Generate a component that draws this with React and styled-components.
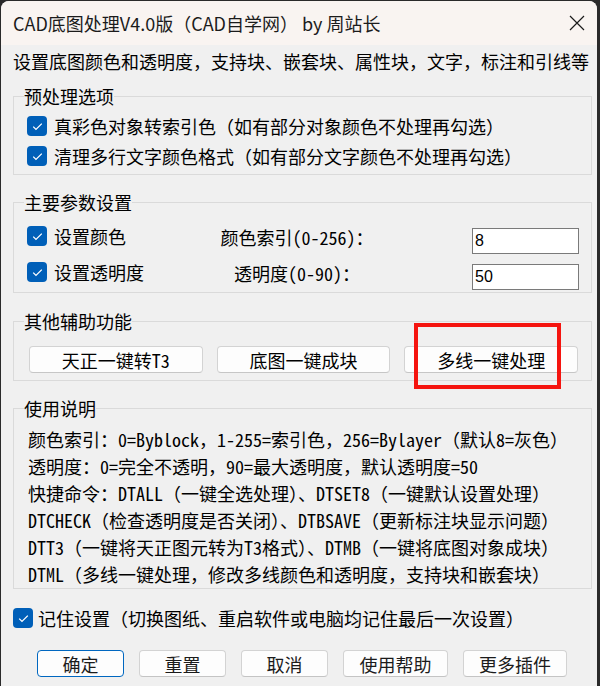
import styled, { createGlobalStyle } from "styled-components";

const GlobalStyle = createGlobalStyle`
 html, body {
  margin: 0;
  padding: 0;
  background: #2a2a2a;
 }
 body {
  font-family: "Noto Sans CJK SC", sans-serif;
 }
`

const SONG = `"Noto Sans Mono CJK SC", "Noto Sans CJK SC", monospace`
const HEI = `"Noto Sans CJK SC", "Noto Sans", sans-serif`

const Window = styled.div`
 width: 596px;
 height: 685px;
 margin: 1px 0 0 1px;
 background: #f0f0f0;
 border-radius: 8px 8px 0 0;
 overflow: hidden;
 display: flex;
 flex-direction: column;
`
const TitleBar = styled.div`
 height: 44px;
 flex-shrink: 0;
 background: #f9f4f1;
 display: flex;
 align-items: center;
 justify-content: space-between;
 padding: 0 12px;
 font-family: ${HEI};
 font-size: 18px;
 color: #1b1b1b;
`
const Body = styled.div`
 padding: 0 5px 0 12px;
 color: #000;
`
const Description = styled.div`
 height: 32px;
 line-height: 32px;
 font-family: ${SONG};
 font-size: 18px;
 white-space: nowrap;
`
const Group = styled.fieldset`
 margin: ${p => p.$top}px 0 0;
 border: 1px solid #dadada;
 padding: ${p => p.$pad};
 min-width: 0;
 legend {
  padding: 0;
  line-height: 20px;
  font-family: ${SONG};
  font-size: 18px;
 }
`
const CheckRow = styled.div`
 display: flex;
 align-items: center;
 gap: 7px;
 height: ${p => p.$h || 30}px;
 padding-left: ${p => p.$indent || 0}px;
 font-family: ${p => p.$sans ? HEI : SONG};
 font-size: 18px;
 white-space: nowrap;
`
const Box = styled.span`
 width: 20px;
 height: 20px;
 flex-shrink: 0;
 border-radius: 4px;
 background: #005fb8;
 display: flex;
 align-items: center;
 justify-content: center;
`
const ParamRow = styled.div`
 display: flex;
 align-items: flex-start;
 height: ${p => p.$h}px;
 padding-left: 3px;
`
const ParamCheck = styled(CheckRow)`
 width: 172px;
 height: 20px;
 padding-left: 0;
`
const ParamLabel = styled.div`
 width: 196px;
 text-align: center;
 line-height: 22px;
 font-family: ${SONG};
 font-size: 18px;
 white-space: nowrap;
`
const NumInput = styled.input`
 margin: 2px 0 0 auto;
 width: 107px;
 height: 26px;
 box-sizing: border-box;
 border: 1px solid #7a7a7a;
 background: #fff;
 padding: 0 2px;
 font-family: "Liberation Sans", Arial, sans-serif;
 font-size: 16px;
 color: #000;
 outline: none;
`
const ToolRow = styled.div`
 position: relative;
 display: grid;
 grid-template-columns: repeat(3, 1fr);
 gap: 14px;
 padding: 0 3px 0 5px;
`
const ToolButton = styled.button`
 height: 27px;
 background: #fdfdfd;
 border: 1px solid #d3d3d3;
 border-bottom-color: #c6c6c6;
 border-radius: 4px;
 font-family: ${SONG};
 font-size: 18px;
 color: #000;
 padding: 0;
`
const Highlight = styled.div`
 position: absolute;
 left: 390px;
 top: -23px;
 width: 147px;
 height: 66px;
 box-sizing: border-box;
 border: 4px solid #f5140f;
 pointer-events: none;
`
const Line = styled.div`
 line-height: 27px;
 padding-left: 4px;
 font-family: ${SONG};
 font-size: 18px;
 white-space: nowrap;
`
const Footer = styled.div`
 display: flex;
 gap: 15px;
 margin-top: 20px;
 padding-left: 24px;
`
const DlgButton = styled.button`
 width: ${p => p.$w}px;
 height: 27px;
 background: #fdfdfd;
 border: 1px solid ${p => p.$primary ? "#0067c0" : "#d3d3d3"};
 border-bottom-color: ${p => p.$primary ? "#0067c0" : "#c4c4c4"};
 border-radius: 4px;
 font-family: ${HEI};
 font-size: 18px;
 color: #1b1b1b;
 padding: 0;
`

const Check = () => (
 <Box>
  <svg width="11" height="9" viewBox="0 0 11 9">
   <path d="M1.2 4.6 L4 7.4 L9.8 1.6" fill="none" stroke="#fff" strokeWidth="1.3" />
  </svg>
 </Box>
)

const CloseIcon = () => (
 <svg width="16" height="16" viewBox="0 0 16 16">
  <path d="M1 1 L15 15 M15 1 L1 15" stroke="#1b1b1b" strokeWidth="1.2" />
 </svg>
)

const notes = [
 "颜色索引：0=Byblock，1-255=索引色，256=Bylayer（默认8=灰色）",
 "透明度：0=完全不透明，90=最大透明度，默认透明度=50",
 "快捷命令：DTALL（一键全选处理）、DTSET8（一键默认设置处理）",
 "DTCHECK（检查透明度是否关闭）、DTBSAVE（更新标注块显示问题）",
 "DTT3（一键将天正图元转为T3格式）、DTMB（一键将底图对象成块）",
 "DTML（多线一键处理，修改多线颜色和透明度，支持块和嵌套块）",
]

const footerButtons = [
 { label: "确定", w: 87, primary: true },
 { label: "重置", w: 87 },
 { label: "取消", w: 87 },
 { label: "使用帮助", w: 105 },
 { label: "更多插件", w: 104 },
]

export default function App() {
 return (
  <>
   <GlobalStyle />
   <Window>
    <TitleBar>
     <span>CAD底图处理V4.0版（CAD自学网） by 周站长</span>
     <CloseIcon />
    </TitleBar>
    <Body>
     <Description>设置底图颜色和透明度，支持块、嵌套块、属性块，文字，标注和引线等</Description>

     <Group $top={9} $pad="5px 10px 3px">
      <legend>预处理选项</legend>
      <CheckRow $indent={3}><Check />真彩色对象转索引色（如有部分对象颜色不处理再勾选）</CheckRow>
      <CheckRow $indent={3}><Check />清理多行文字颜色格式（如有部分文字颜色不处理再勾选）</CheckRow>
     </Group>

     <Group $top={17} $pad="14px 12px 2px 10px">
      <legend>主要参数设置</legend>
      <ParamRow $h={36}>
       <ParamCheck><Check />设置颜色</ParamCheck>
       <ParamLabel>颜色索引(0-256)：</ParamLabel>
       <NumInput defaultValue="8" />
      </ParamRow>
      <ParamRow $h={28}>
       <ParamCheck><Check />设置透明度</ParamCheck>
       <ParamLabel>透明度(0-90)：</ParamLabel>
       <NumInput defaultValue="50" />
      </ParamRow>
     </Group>

     <Group $top={18} $pad="15px 10px 7px">
      <legend>其他辅助功能</legend>
      <ToolRow>
       <ToolButton>天正一键转T3</ToolButton>
       <ToolButton>底图一键成块</ToolButton>
       <ToolButton>多线一键处理</ToolButton>
       <Highlight />
      </ToolRow>
     </Group>

     <Group $top={17} $pad="8px 10px 0">
      <legend>使用说明</legend>
      {notes.map(n => <Line key={n}>{n}</Line>)}
     </Group>

     <CheckRow $sans $h={24} style={{ marginTop: 17, gap: 5 }}><Check />记住设置（切换图纸、重启软件或电脑均记住最后一次设置）</CheckRow>

     <Footer>
      {footerButtons.map(b => (
       <DlgButton key={b.label} $w={b.w} $primary={b.primary}>{b.label}</DlgButton>
      ))}
     </Footer>
    </Body>
   </Window>
  </>
 )
}
